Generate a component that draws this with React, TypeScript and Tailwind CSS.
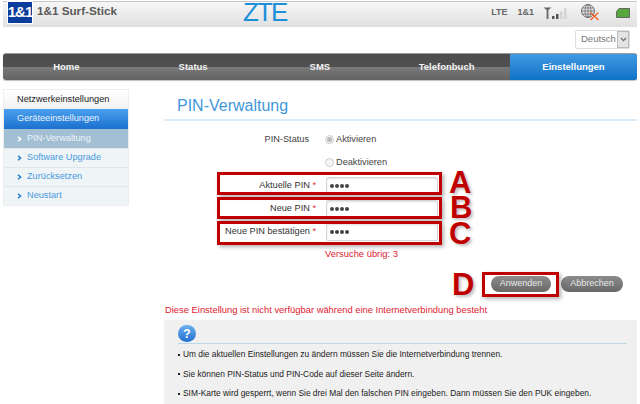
import React from "react";

const menu = ["PIN-Verwaltung", "Software Upgrade", "Zurücksetzen", "Neustart"];
const tabs = ["Home", "Status", "SMS", "Telefonbuch"];
const hints = [
  "Um die aktuellen Einstellungen zu ändern müssen Sie die Internetverbindung trennen.",
  "Sie können PIN-Status und PIN-Code auf dieser Seite ändern.",
  "SIM-Karte wird gesperrt, wenn Sie drei Mal den falschen PIN eingeben. Dann müssen Sie den PUK eingeben.",
];

function Chevron({ active }: { active: boolean }) {
  return (
    <svg width="5" height="6" viewBox="0 0 5 6" className="mr-[5px] shrink-0">
      <path d="M1 0.8 L3.6 3 L1 5.2" fill="none" stroke={active ? "#ffffff" : "#1c7fd0"} strokeWidth="1.5" />
    </svg>
  );
}

function SignalIcons() {
  return (
    <div className="flex items-center">
      <svg width="27" height="14" viewBox="0 0 27 14">
        <path d="M0.5 1.5 H8.5 L5.4 4 V13 H3.6 V4 Z" fill="#666666" />
        <rect x="9" y="10" width="2.5" height="3" fill="#555555" />
        <rect x="13" y="8" width="2.5" height="5" fill="#555555" />
        <rect x="17" y="5.5" width="2.5" height="7.5" fill="#d4d4d4" />
        <rect x="21" y="2" width="2.5" height="11" fill="#d4d4d4" />
      </svg>
      <svg width="20" height="17" viewBox="0 0 20 17" className="ml-[10px]">
        <circle cx="8" cy="7" r="6.4" fill="none" stroke="#666666" strokeWidth="1" />
        <ellipse cx="8" cy="7" rx="3" ry="6.4" fill="none" stroke="#666666" strokeWidth="0.8" />
        <path d="M8 0.6 V13.4 M1.6 7 H14.4 M2.4 4 H13.6 M2.4 10 H13.6" stroke="#666666" strokeWidth="0.8" />
        <path d="M10.5 8.5 L18.5 16 M18.5 8.5 L10.5 16" stroke="#f0622c" strokeWidth="1.4" />
      </svg>
      <svg width="14" height="10" viewBox="0 0 14 10" className="ml-[16px]">
        <path d="M3 0.5 H13.5 V9.5 H0.5 V3.5 Z" fill="#57a83c" stroke="#666666" strokeWidth="1" />
      </svg>
    </div>
  );
}

function PinRow({ label }: { label: string }) {
  return (
    <div className="flex h-[23px] items-center">
      <div className="w-[101px] pr-[2px] text-right text-[#333333]">
        {label} <span className="text-[#e01a2b]">*</span>
      </div>
      <div className="ml-[8px] flex h-[18px] w-[112px] items-center rounded-[2px] border border-[#d5d5d5] bg-white pl-[3px] shadow-[inset_0_1px_2px_rgba(0,0,0,0.12)]">
        <div className="flex gap-[1px]">
          {[0, 1, 2, 3].map((i) => (
            <span key={i} className="h-[4px] w-[4px] rounded-full bg-[#444444]" />
          ))}
        </div>
      </div>
    </div>
  );
}

function Radio({ checked, label }: { checked: boolean; label: string }) {
  return (
    <div className="flex items-center">
      <span className="flex h-[9px] w-[9px] items-center justify-center rounded-full border border-[#cccccc] bg-[#f6f6f6]">
        {checked && <span className="h-[5px] w-[5px] rounded-full bg-[#bbbbbb]" />}
      </span>
      <span className="ml-[2px] text-[#444444]">{label}</span>
    </div>
  );
}

function Mark({ className, letter, letterClass }: { className: string; letter: string; letterClass: string }) {
  return (
    <>
      <div className={"absolute border-[3px] border-[#c00000] shadow-[2px_2px_4px_rgba(0,0,0,0.3)] " + className} />
      <div className={"absolute text-[31px] leading-[24px] font-bold text-[#c00000] [text-shadow:2px_2px_3px_rgba(0,0,0,0.25)] " + letterClass}>
        {letter}
      </div>
    </>
  );
}

export default function App() {
  return (
    <div className="relative h-[404px] w-[640px] overflow-hidden bg-white font-['Liberation_Sans',Arial,sans-serif] text-[9.2px]">
      <div className="px-[3px] pt-[1px]">
        {/* header */}
        <div className="flex h-[26px] items-start border-t border-[#c8c8c8] bg-gradient-to-b from-[#f6f6f6] to-[#e0e0e0]">
          <div className="ml-[4px] -mt-[1px] flex h-[23px] w-[26px] items-center justify-center border border-white bg-[#0a3d9c] text-[15px] font-bold tracking-[-1px] text-white">
            1&amp;1
          </div>
          <div className="ml-[4px] mt-[2px] text-[11.7px] leading-[13px] font-bold text-[#5a5a5a]">1&amp;1 Surf-Stick</div>
          <div className="ml-[126px] -mt-[1px] text-[26px] leading-[22px] tracking-[-1.8px] text-[#1b8fd8]">ZTE</div>
          <div className="ml-auto mr-[7px] mt-[2px] flex items-center text-[9px] font-bold text-[#666666]">
            <span>LTE</span>
            <span className="ml-[10px] mr-[9px]">1&amp;1</span>
            <SignalIcons />
          </div>
        </div>

        {/* language */}
        <div className="mt-[3px] flex justify-end pr-[7px]">
          <div className="flex h-[19px] w-[55px] items-center rounded-[2px] border border-[#dddddd] bg-white pl-[5px] text-[9.5px] text-[#777777]">
            <span className="flex-1">Deutsch</span>
            <span className="flex h-full w-[12px] items-center justify-center border border-[#bbbbbb] bg-[#e4e4e4]">
              <svg width="7" height="5" viewBox="0 0 7 5">
                <path d="M1 1 L3.5 3.6 L6 1" fill="none" stroke="#666666" strokeWidth="1.1" />
              </svg>
            </span>
          </div>
        </div>

        {/* nav */}
        <div className="mt-[4px] flex h-[27px] overflow-hidden rounded-[3px] border-t border-[#999999] bg-[linear-gradient(#4c4c4c_0%,#505050_48%,#7a7a7a_50%,#636363_100%)] text-[9.5px] font-bold text-[#f2f2f2] shadow-[0_1px_1px_rgba(0,0,0,0.25)]">
          <div className="flex flex-1">
            {tabs.map((t) => (
              <div key={t} className="flex flex-1 items-center justify-center">
                {t}
              </div>
            ))}
          </div>
          <div className="flex w-[127px] items-center justify-center bg-gradient-to-b from-[#3f9ae2] to-[#0a72c6] text-white">
            Einstellungen
          </div>
        </div>

        <div className="mt-[9px] flex">
          {/* sidebar */}
          <div className="h-[117px] w-[126px] border border-[#eeeeee]">
            <div className="flex h-[19px] items-center bg-gradient-to-b from-white to-[#f1f1f1] pl-[13px] text-[#222222]">
              Netzwerkeinstellungen
            </div>
            <div className="flex h-[20px] items-center bg-gradient-to-b from-[#4aa0ee] to-[#1a70cf] pl-[13px] text-[#e8f2fb]">
              Geräteeinstellungen
            </div>
            {menu.map((m, i) => (
              <div
                key={m}
                className={
                  i === 0
                    ? "flex h-[19px] items-center bg-[#a2bfd3] pl-[13px] text-[#eef4f8]"
                    : "flex h-[19px] items-center border-t border-[#e2e6e8] bg-[#eff4f6] pl-[13px] text-[#4a9ade]"
                }
              >
                <Chevron active={i === 0} />
                {m}
              </div>
            ))}
          </div>

          {/* content */}
          <div className="ml-[35px] flex-1">
            <div className="mt-[2px] h-[30px] border-b-2 border-[#daecf9] pl-[13px] text-[16px] leading-[30px] text-[#3f97db]">
              PIN-Verwaltung
            </div>
            <div className="mt-[12px] pl-[53px]">
              <div className="flex h-[14px] items-center">
                <div className="w-[101px] pr-[9px] text-right text-[#444444]">PIN-Status</div>
                <div className="ml-[7px]">
                  <Radio checked label="Aktivieren" />
                </div>
              </div>
              <div className="mt-[9px] flex h-[14px] items-center pl-[108px]">
                <Radio checked={false} label="Deaktivieren" />
              </div>
              <div className="mt-[4px]">
                <PinRow label="Aktuelle PIN" />
                <PinRow label="Neue PIN" />
                <PinRow label="Neue PIN bestätigen" />
              </div>
              <div className="mt-[4px] pl-[108px] text-[9.4px] text-[#e0202f]">Versuche übrig: 3</div>
            </div>
            <div className="mt-[15px] flex justify-end gap-[10px] pr-[14px] text-[9px] text-[#e8e8e8]">
              <div className="flex h-[16px] w-[60px] items-center justify-center rounded-full bg-gradient-to-b from-[#8c8c8c] to-[#686868]">
                Anwenden
              </div>
              <div className="flex h-[16px] w-[62px] items-center justify-center rounded-full bg-gradient-to-b from-[#8c8c8c] to-[#686868]">
                Abbrechen
              </div>
            </div>
            <div className="ml-[1px] mt-[12px] whitespace-nowrap text-[9.4px] leading-[12px] text-[#e0202f]">
              Diese Einstellung ist nicht verfügbar während eine Internetverbindung besteht
            </div>
            <div className="mt-[4px] h-[90px] bg-[#f0f0f0] pl-[14px] pr-[10px] pt-[5px]">
              <div className="flex h-[17px] w-[18px] items-center justify-center rounded-full bg-gradient-to-b from-[#6cb0ee] to-[#1f6fd0] text-[12px] font-bold text-white">
                ?
              </div>
              <div className="mt-[1px] border-t border-[#bcd6ea]" />
              <div className="mt-[5px] flex flex-col gap-[8.5px] text-[8.4px] leading-[11px] text-[#222222]">
                {hints.map((h) => (
                  <div key={h} className="flex items-center whitespace-nowrap">
                    <span className="mr-[3px] h-[2px] w-[2px] bg-[#222222]" />
                    {h}
                  </div>
                ))}
              </div>
            </div>
          </div>
        </div>
      </div>

      {/* annotations drawn over the page */}
      <Mark className="left-[217px] top-[172px] h-[23px] w-[225px]" letter="A" letterClass="left-[449px] top-[171px]" />
      <Mark className="left-[217px] top-[197px] h-[22px] w-[225px]" letter="B" letterClass="left-[450px] top-[196px]" />
      <Mark className="left-[217px] top-[221px] h-[24px] w-[225px]" letter="C" letterClass="left-[449px] top-[222px]" />
      <Mark className="left-[482px] top-[272px] h-[25px] w-[77px]" letter="D" letterClass="left-[452px] top-[273px]" />
    </div>
  );
}
